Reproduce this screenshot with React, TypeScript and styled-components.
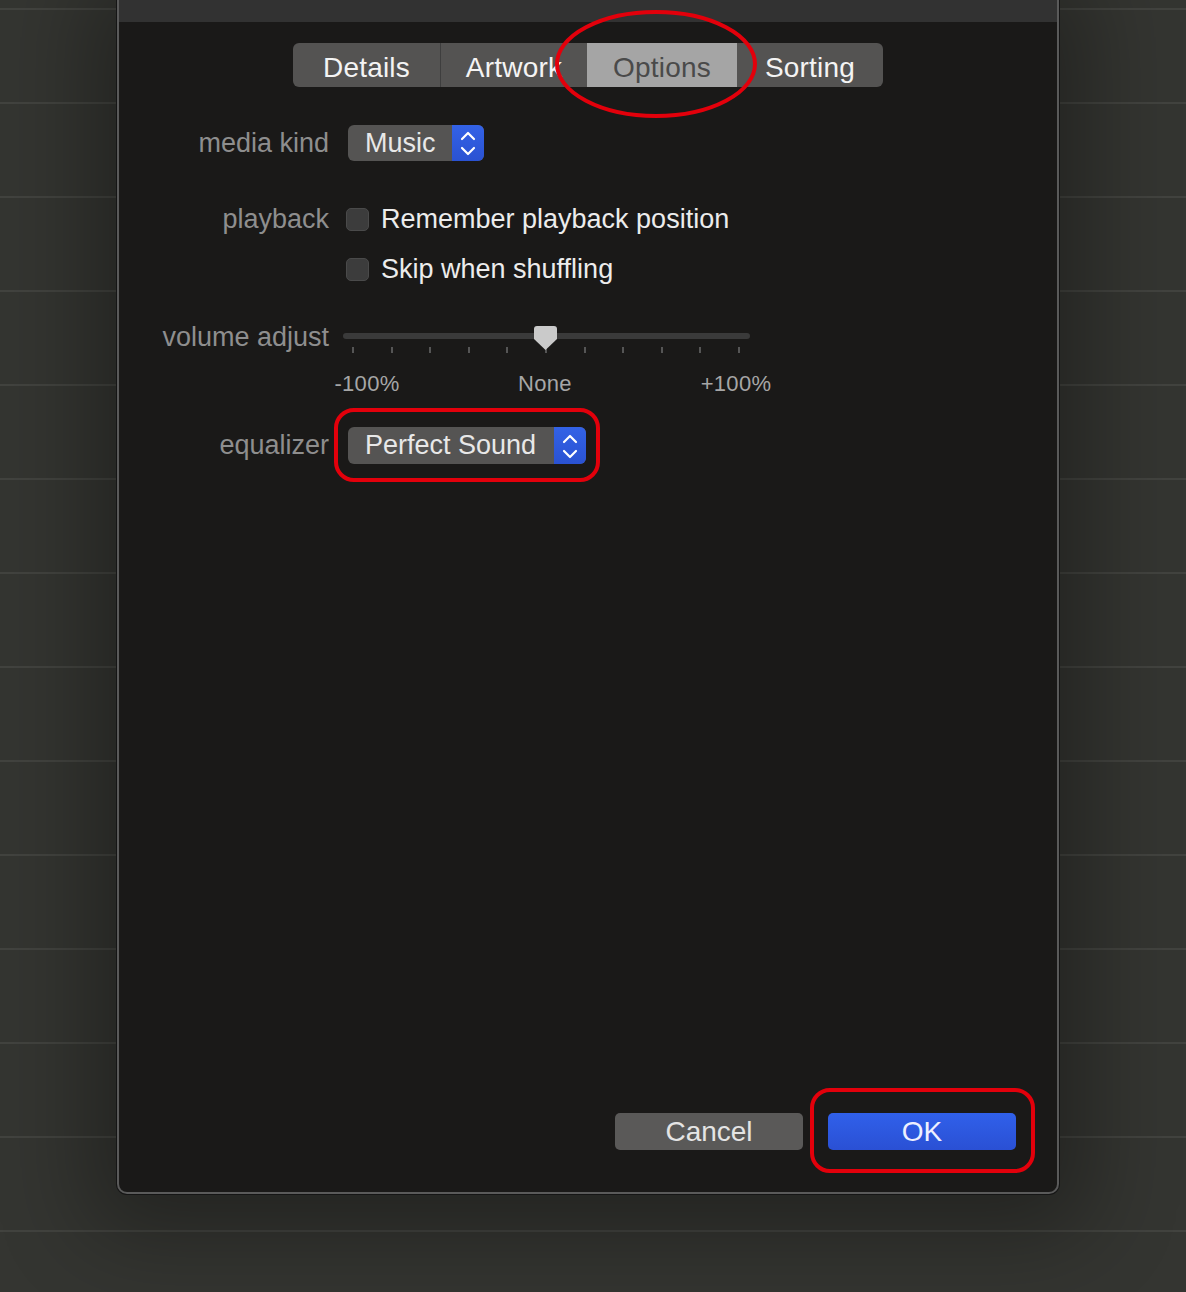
import React from "react";
import styled, { createGlobalStyle } from "styled-components";

const Global = createGlobalStyle`
  html, body { margin: 0; padding: 0; background: #343531; }
  body { font-family: "Liberation Sans", Arial, Helvetica, sans-serif; -webkit-font-smoothing: antialiased; }
`;

const Desktop = styled.div`
  width: 1186px;
  height: 1292px;
  overflow: hidden;
  background-color: #343531;
  background-image: repeating-linear-gradient(
    to bottom,
    transparent 0 8px,
    #42433f 8px 10px,
    transparent 10px 94px
  );
  display: flex;
  align-items: flex-start;
`;

const Window = styled.div`
  margin-left: 117px;
  width: 942px;
  height: 1194px;
  box-sizing: border-box;
  background: #1a1918;
  border: 2px solid #5a5a5a;
  border-top: none;
  border-radius: 0 0 10px 10px;
  box-shadow: 0 0 0 1px #151515, 0 10px 90px 30px rgba(0, 0, 0, 0.33);
  display: flex;
  flex-direction: column;
`;

const TitleStrip = styled.div`
  height: 22px;
  background: #323232;
`;

const TabBar = styled.div`
  margin-top: 21px;
  align-self: center;
  display: flex;
  height: 44px;
  background: #545352;
  border-radius: 6px;
  overflow: visible;
`;

const Tab = styled.div<{ $w: number; $active?: boolean; $divider?: boolean }>`
  position: relative;
  width: ${(p) => p.$w}px;
  box-sizing: border-box;
  padding-top: 5px;
  display: flex;
  align-items: center;
  justify-content: center;
  font-size: 28px;
  letter-spacing: 0.2px;
  color: ${(p) => (p.$active ? "#4a4a4a" : "#f4f4f4")};
  background: ${(p) => (p.$active ? "#a5a5a5" : "transparent")};
  border-left: ${(p) => (p.$divider ? "1px solid #3e3e3e" : "none")};
  &:first-child { border-radius: 6px 0 0 6px; }
  &:last-child { border-radius: 0 6px 6px 0; }
`;

const Ellipse = styled.svg`
  position: absolute;
  left: -32px;
  top: -33px;
  width: 202px;
  height: 108px;
  overflow: visible;
  pointer-events: none;
`;

const Row = styled.div<{ $top: number; $h: number }>`
  margin-top: ${(p) => p.$top}px;
  height: ${(p) => p.$h}px;
  display: flex;
  align-items: center;
`;

const FieldLabel = styled.span`
  width: 210px;
  flex: none;
  text-align: right;
  font-size: 27px;
  color: #8e8e8e;
`;

const Control = styled.div<{ $shift?: number }>`
  margin-left: ${(p) => 19 + (p.$shift ?? 0)}px;
  display: flex;
  align-items: center;
  position: relative;
`;

const Popup = styled.div<{ $w: number }>`
  position: relative;
  width: ${(p) => p.$w}px;
  height: 100%;
  box-sizing: border-box;
  display: flex;
  align-items: center;
  background: #555453;
  border-radius: 6px;
  padding-left: 17px;
  font-size: 27px;
  color: #e8e8e8;
`;

const PopupArrows = styled.div`
  position: absolute;
  right: 0;
  top: 0;
  bottom: 0;
  width: 32px;
  border-radius: 0 6px 6px 0;
  background: linear-gradient(#3362e6, #2a52d2);
  display: flex;
  align-items: center;
  justify-content: center;
`;

const Annotation = styled.span<{ $t: number; $r: number; $b: number; $l: number }>`
  position: absolute;
  top: ${(p) => -p.$t}px;
  right: ${(p) => -p.$r}px;
  bottom: ${(p) => -p.$b}px;
  left: ${(p) => -p.$l}px;
  border: 4px solid #e3000b;
  border-radius: 20px;
  pointer-events: none;
`;

const Checkbox = styled.span`
  width: 23px;
  height: 23px;
  box-sizing: border-box;
  border-radius: 5px;
  background: #3c3c3c;
  border: 1px solid #4a4a4a;
  flex: none;
`;

const CheckText = styled.span`
  margin-left: 12px;
  font-size: 27px;
  color: #ececec;
`;

const Slider = styled.div`
  position: relative;
  width: 407px;
  height: 36px;
  box-sizing: border-box;
  padding-top: 14px;
  align-self: flex-start;
`;

const Track = styled.div`
  height: 6px;
  border-radius: 3px;
  background: #3a3a3a;
`;

const Ticks = styled.div`
  margin-top: 8px;
  padding: 0 10px 0 9px;
  display: flex;
  justify-content: space-between;
`;

const Tick = styled.span`
  width: 2px;
  height: 6px;
  background: #555;
`;

const Knob = styled.svg`
  position: absolute;
  left: 191px;
  top: 7px;
  width: 23px;
  height: 24px;
`;

const ScaleLabels = styled.div`
  margin-left: 214px;
  display: flex;
  align-items: center;
  font-size: 22px;
  letter-spacing: 0.3px;
  color: #a6a6a6;
`;

const ScaleLabel = styled.span<{ $w: number }>`
  width: ${(p) => p.$w}px;
  text-align: center;
`;

const Footer = styled.div`
  margin-top: auto;
  padding: 0 41px 42px 0;
  display: flex;
  justify-content: flex-end;
  gap: 25px;
`;

const Button = styled.div<{ $primary?: boolean }>`
  position: relative;
  width: 188px;
  height: 37px;
  border-radius: 5px;
  display: flex;
  align-items: center;
  justify-content: center;
  font-size: 28px;
  color: ${(p) => (p.$primary ? "#eef0ff" : "#e4e4e4")};
  background: ${(p) => (p.$primary ? "linear-gradient(#3060ea, #2a50d4)" : "#5a5958")};
`;

const Chevrons = () => (
  <svg width="32" height="36" viewBox="0 0 32 36" fill="none">
    <path d="M10 14 L16 8 L22 14" stroke="#fff" strokeWidth="2.2" strokeLinecap="round" strokeLinejoin="round" />
    <path d="M10 23 L16 29 L22 23" stroke="#fff" strokeWidth="2.2" strokeLinecap="round" strokeLinejoin="round" />
  </svg>
);

export default function App() {
  const ticks = Array.from({ length: 11 });
  return (
    <>
      <Global />
      <Desktop>
        <Window>
          <TitleStrip />
          <TabBar>
            <Tab $w={147}>Details</Tab>
            <Tab $w={147} $divider>Artwork</Tab>
            <Tab $w={150} $active>
              Options
              <Ellipse viewBox="0 0 202 108">
                <ellipse cx="101" cy="54" rx="99" ry="52" fill="none" stroke="#e3000b" strokeWidth="4" />
              </Ellipse>
            </Tab>
            <Tab $w={146}>Sorting</Tab>
          </TabBar>

          <Row $top={38} $h={36}>
            <FieldLabel>media kind</FieldLabel>
            <Control style={{ height: "100%" }}>
              <Popup $w={136}>
                Music
                <PopupArrows>
                  <Chevrons />
                </PopupArrows>
              </Popup>
            </Control>
          </Row>

          <Row $top={40} $h={36}>
            <FieldLabel>playback</FieldLabel>
            <Control $shift={-2}>
              <Checkbox />
              <CheckText>Remember playback position</CheckText>
            </Control>
          </Row>

          <Row $top={14} $h={36}>
            <FieldLabel />
            <Control $shift={-2}>
              <Checkbox />
              <CheckText>Skip when shuffling</CheckText>
            </Control>
          </Row>

          <Row $top={32} $h={36}>
            <FieldLabel>volume adjust</FieldLabel>
            <Control $shift={-5} style={{ alignSelf: "stretch" }}>
              <Slider>
                <Track />
                <Ticks>
                  {ticks.map((_, i) => (
                    <Tick key={i} />
                  ))}
                </Ticks>
                <Knob viewBox="0 0 23 24">
                  <path d="M3 0 H20 Q23 0 23 3 V13 L11.5 24 L0 13 V3 Q0 0 3 0 Z" fill="#cacaca" />
                </Knob>
              </Slider>
            </Control>
          </Row>

          <Row $top={17} $h={24}>
            <ScaleLabels>
              <ScaleLabel $w={68}>-100%</ScaleLabel>
              <ScaleLabel $w={288}>None</ScaleLabel>
              <ScaleLabel $w={94}>+100%</ScaleLabel>
            </ScaleLabels>
          </Row>

          <Row $top={31} $h={37}>
            <FieldLabel>equalizer</FieldLabel>
            <Control style={{ height: "100%" }}>
              <Popup $w={238}>
                Perfect Sound
                <PopupArrows>
                  <Chevrons />
                </PopupArrows>
                <Annotation $t={19} $r={14} $b={18} $l={14} />
              </Popup>
            </Control>
          </Row>

          <Footer>
            <Button>Cancel</Button>
            <Button $primary>
              OK
              <Annotation $t={25} $r={19} $b={23} $l={18} />
            </Button>
          </Footer>
        </Window>
      </Desktop>
    </>
  );
}
